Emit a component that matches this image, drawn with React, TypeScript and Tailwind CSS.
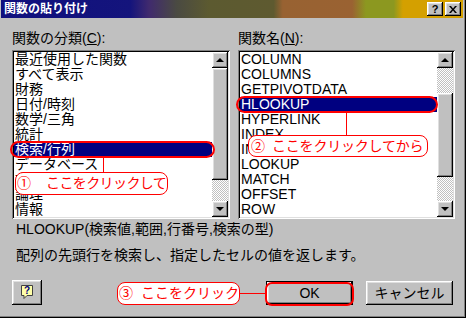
const FONT = "font-['Liberation_Sans','Noto_Sans_CJK_JP',sans-serif]"
const RAISED = 'shadow-[inset_-1px_-1px_#000,inset_1px_1px_#fff,inset_-2px_-2px_#808080,inset_2px_2px_#dfdfdf]'
const SUNKEN = 'shadow-[inset_1px_1px_#808080,inset_-1px_-1px_#fff,inset_2px_2px_#000,inset_-2px_-2px_#dfdfdf]'
const CHECKER = 'bg-[repeating-conic-gradient(#fff_0_25%,#c0c0c0_0_50%)] bg-size-[2px_2px]'

const categories = ['最近使用した関数', 'すべて表示', '財務', '日付/時刻', '数学/三角', '統計', '検索/行列', 'データベース', '文字列操作', '論理', '情報']
const functions = ['COLUMN', 'COLUMNS', 'GETPIVOTDATA', 'HLOOKUP', 'HYPERLINK', 'INDEX', 'INDIRECT', 'LOOKUP', 'MATCH', 'OFFSET', 'ROW']

function Arrow({ up }: { up?: boolean }) {
  return (
    <div className={`flex h-[16px] w-[16px] items-center justify-center bg-[#c0c0c0] ${RAISED}`}>
      {up ? (
        <div className="h-0 w-0 border-x-[4px] border-b-[4px] border-x-transparent border-b-black" />
      ) : (
        <div className="h-0 w-0 border-x-[4px] border-t-[4px] border-x-transparent border-t-black" />
      )}
    </div>
  )
}

function ListBox({ items, selected, left }: { items: string[]; selected: number; left?: boolean }) {
  return (
    <div className={`flex h-[169px] bg-white p-[2px] ${SUNKEN}`}>
      <div className="flex flex-1 flex-col">
        {items.map((it, i) => (
          <div
            key={it}
            className={`h-[15px] whitespace-nowrap pl-[1px] text-[14px] leading-[15px] ${
              i === selected ? 'bg-[#000080] text-white' : 'text-black'
            }`}
          >
            {it}
          </div>
        ))}
      </div>
      {/* scrollbar */}
      <div className="flex w-[16px] flex-col">
        <Arrow up />
        {left ? (
          <>
            <div className={`h-[112px] bg-[#c0c0c0] ${RAISED}`} />
            <div className={`flex-1 ${CHECKER}`} />
          </>
        ) : (
          <>
            <div className={`h-[25px] ${CHECKER}`} />
            <div className={`h-[84px] bg-[#c0c0c0] ${RAISED}`} />
            <div className={`flex-1 ${CHECKER}`} />
          </>
        )}
        <Arrow />
      </div>
    </div>
  )
}

export default function App() {
  return (
    <div className={`relative h-[318px] w-[466px] overflow-hidden bg-[#c0c0c0] text-black ${FONT} shadow-[inset_-1px_-1px_#000,inset_-2px_-2px_#808080]`}>
      {/* Title bar */}
      <div className="ml-[1px] mr-[3px] flex h-[18px] items-center bg-[linear-gradient(90deg,#10107e_0%,#14147c_28%,#402a6e_32%,#4a4a42_38%,#5c5a30_45%,#5e5a30_59%,#986232_61%,#9a6232_76%,#8c9820_79%,#8c9820_85%,#d4a000_87%,#d4a000_100%)] pl-[3px] pr-[2px]">
        <span className="text-[12px] font-bold leading-[18px] text-white">関数の貼り付け</span>
        <div className="ml-auto flex gap-[2px]">
          <div className={`flex h-[14px] w-[16px] items-center justify-center bg-[#c0c0c0] text-[11px] font-bold leading-none ${RAISED}`}>?</div>
          <div className={`flex h-[14px] w-[16px] items-center justify-center bg-[#c0c0c0] ${RAISED}`}>
            <svg width="8" height="7" viewBox="0 0 8 7">
              <path d="M0 0h2l2 2.5L6 0h2L5 3.5 8 7H6L4 4.5 2 7H0l3-3.5z" fill="#000" />
            </svg>
          </div>
        </div>
      </div>

      {/* Lists */}
      <div className="flex gap-[8px] pl-[12px] pt-[12px]">
        <div className="w-[218px]">
          <div className="h-[16px] text-[14px] leading-[16px]">
            関数の分類(<span className="underline">C</span>):
          </div>
          <div className="mt-[4px]">
            <ListBox items={categories} selected={6} left />
          </div>
        </div>
        <div className="w-[217px]">
          <div className="h-[16px] text-[14px] leading-[16px]">
            関数名(<span className="underline">N</span>):
          </div>
          <div className="mt-[4px]">
            <ListBox items={functions} selected={3} />
          </div>
        </div>
      </div>

      {/* Description */}
      <div className="mt-[2px] pl-[16px] text-[14px] leading-[16px]">
        <div>HLOOKUP(検索値,範囲,行番号,検索の型)</div>
        <div className="mt-[10px]">配列の先頭行を検索し、指定したセルの値を返します。</div>
      </div>

      {/* Buttons */}
      <div className="mt-[17px] flex items-start pl-[12px]">
        <div className={`flex h-[25px] w-[30px] items-center justify-center bg-[#c0c0c0] ${RAISED}`}>
          <svg width="13" height="15" viewBox="0 0 13 15">
            <path d="M0.5 0.5h11v10h-5.5l-3 3v-3h-2.5z" fill="#ffffa8" stroke="#404040" />
            <text x="6" y="9" textAnchor="middle" fontSize="10" fontWeight="bold" fill="#000080" fontFamily="Liberation Sans">?</text>
          </svg>
        </div>
        <div className="ml-[224px] mt-[1px] h-[24px] w-[87px] border border-black">
          <div className={`flex h-full w-full items-center justify-center bg-[#c0c0c0] text-[14px] ${RAISED}`}>OK</div>
        </div>
        <div className={`ml-[13px] mt-[1px] flex h-[24px] w-[87px] items-center justify-center bg-[#c0c0c0] text-[14px] ${RAISED}`}>
          キャンセル
        </div>
      </div>

      {/* Annotations */}
      <div className="absolute left-[10px] top-[141px] h-[17px] w-[205px] rounded-full border-2 border-[#ff0000]" />
      <div className="absolute left-[103px] top-[158px] h-[14px] w-[1px] bg-[#ff0000]" />
      <div className="absolute left-[15px] top-[172px] flex h-[23px] w-[153px] items-center whitespace-nowrap rounded-[8px] border border-[#ff0000] bg-white pl-[1px] text-[14px] text-[#ff0000]">
        <span>①</span>
        <span className="ml-[15px] tracking-[-0.6px]">ここをクリックして</span>
      </div>

      <div className="absolute left-[236px] top-[96px] h-[17px] w-[202px] rounded-full border-2 border-[#ff0000]" />
      <div className="absolute left-[346px] top-[113px] h-[22px] w-[1px] bg-[#ff0000]" />
      <div className="absolute left-[248px] top-[135px] flex h-[22px] w-[180px] items-center whitespace-nowrap rounded-[8px] border border-[#ff0000] bg-white pl-[2px] text-[14px] text-[#ff0000]">
        <span>②</span>
        <span className="ml-[7px] tracking-[-0.2px]">ここをクリックしてから</span>
      </div>

      <div className="absolute left-[117px] top-[282px] flex h-[23px] w-[123px] items-center whitespace-nowrap rounded-[8px] border border-[#ff0000] bg-white pl-[1px] text-[14px] text-[#ff0000]">
        <span>③</span>
        <span className="ml-[8px]">ここをクリック</span>
      </div>
      <div className="absolute left-[240px] top-[293px] h-[1px] w-[26px] bg-[#ff0000]" />
      <div className="absolute left-[265px] top-[282px] h-[24px] w-[89px] rounded-[7px] border-2 border-[#ff0000]" />
    </div>
  )
}
